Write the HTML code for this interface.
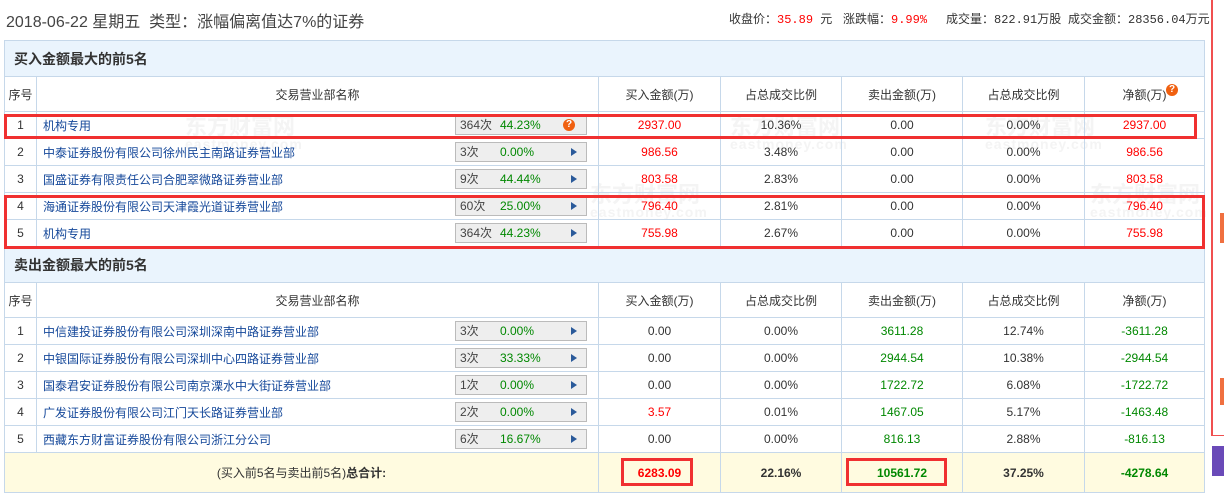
<!DOCTYPE html>
<html><head><meta charset="utf-8">
<style>
*{margin:0;padding:0;box-sizing:border-box}
body{width:1224px;height:496px;background:#fff;font-family:"Liberation Sans","Noto Sans CJK SC",sans-serif;font-size:12px;color:#333;position:relative;overflow:hidden}
.abs{position:absolute}
.title{left:6px;top:8px;font-size:16px;color:#444}
.info{top:10px;font-size:12px;color:#333;font-family:"Liberation Mono","Noto Sans CJK SC",monospace}
.red{color:#f00}.green{color:#080}.blue{color:#15489a}
table{position:absolute;left:4px;border-collapse:collapse;table-layout:fixed;width:1200px}
td{border:1px solid #c6d8ea;text-align:center;height:27px;padding:0;white-space:nowrap;overflow:hidden}
td.n{text-align:left;padding-left:6px;color:#15489a;position:relative}
.sec td{background:#eaf4fd;height:36px;text-align:left;padding-left:9px;font-weight:bold;font-size:14px;color:#333}
.hd td{height:35px;color:#333}
.btn{position:absolute;left:418px;top:3px;width:132px;height:20px;background:#eee;border:1px solid #bbb;font-size:12px;line-height:18px;color:#444}
.btn .c{position:absolute;left:4px}
.btn .p{position:absolute;left:44px;color:#080}
.btn .a{position:absolute;right:9px;top:5px;width:0;height:0;border-left:6px solid #2a5a9a;border-top:4px solid transparent;border-bottom:4px solid transparent}
.q{position:absolute;right:11px;top:3px;width:12px;height:12px;border-radius:6px;background:#f06010;color:#fff;font-size:10px;line-height:12px;text-align:center;font-weight:bold}
.tot td{background:#fffbe0;height:40px;font-weight:bold}
.box{position:absolute;border:3px solid #f03030}
.wm{position:absolute;color:#f4f4f4;font-weight:bold;font-size:22px;line-height:22px;pointer-events:none}
.wm span{display:block;font-size:14px;line-height:12px;letter-spacing:1px}
</style></head><body>
<div class="abs title">2018-06-22 星期五&nbsp; 类型：涨幅偏离值达7%的证券</div>
<div class="abs info" style="left:729px">收盘价：<span class="red">35.89</span> 元</div>
<div class="abs info" style="left:843px">涨跌幅：<span class="red">9.99%</span></div>
<div class="abs info" style="left:946px">成交量：822.91万股</div>
<div class="abs info" style="left:1068px">成交金额：28356.04万元</div>

<div class="wm" style="left:185px;top:116px">东方财富网<span>eastmoney.com</span></div>
<div class="wm" style="left:730px;top:116px">东方财富网<span>eastmoney.com</span></div>
<div class="wm" style="left:985px;top:116px">东方财富网<span>eastmoney.com</span></div>
<div class="wm" style="left:590px;top:184px">东方财富网<span>eastmoney.com</span></div>
<div class="wm" style="left:1090px;top:184px">东方财富网<span>eastmoney.com</span></div>

<table style="top:40px">
<colgroup><col style="width:32px"><col style="width:562px"><col style="width:122px"><col style="width:121px"><col style="width:121px"><col style="width:122px"><col style="width:120px"></colgroup>
<tr class="sec"><td colspan="7">买入金额最大的前5名</td></tr>
<tr class="hd"><td>序号</td><td>交易营业部名称</td><td>买入金额(万)</td><td>占总成交比例</td><td>卖出金额(万)</td><td>占总成交比例</td><td style="position:relative">净额(万)<span class="q" style="right:26px;top:7px">?</span></td></tr>
<tr><td>1</td><td class="n">机构专用<div class="btn"><span class="c">364次</span><span class="p">44.23%</span><span class="q">?</span></div></td><td class="red">2937.00</td><td>10.36%</td><td>0.00</td><td>0.00%</td><td class="red">2937.00</td></tr>
<tr><td>2</td><td class="n">中泰证券股份有限公司徐州民主南路证券营业部<div class="btn"><span class="c">3次</span><span class="p">0.00%</span><i class="a"></i></div></td><td class="red">986.56</td><td>3.48%</td><td>0.00</td><td>0.00%</td><td class="red">986.56</td></tr>
<tr><td>3</td><td class="n">国盛证券有限责任公司合肥翠微路证券营业部<div class="btn"><span class="c">9次</span><span class="p">44.44%</span><i class="a"></i></div></td><td class="red">803.58</td><td>2.83%</td><td>0.00</td><td>0.00%</td><td class="red">803.58</td></tr>
<tr><td>4</td><td class="n">海通证券股份有限公司天津霞光道证券营业部<div class="btn"><span class="c">60次</span><span class="p">25.00%</span><i class="a"></i></div></td><td class="red">796.40</td><td>2.81%</td><td>0.00</td><td>0.00%</td><td class="red">796.40</td></tr>
<tr><td>5</td><td class="n">机构专用<div class="btn"><span class="c">364次</span><span class="p">44.23%</span><i class="a"></i></div></td><td class="red">755.98</td><td>2.67%</td><td>0.00</td><td>0.00%</td><td class="red">755.98</td></tr>
<tr class="sec"><td colspan="7">卖出金额最大的前5名</td></tr>
<tr class="hd"><td>序号</td><td>交易营业部名称</td><td>买入金额(万)</td><td>占总成交比例</td><td>卖出金额(万)</td><td>占总成交比例</td><td>净额(万)</td></tr>
<tr><td>1</td><td class="n">中信建投证券股份有限公司深圳深南中路证券营业部<div class="btn"><span class="c">3次</span><span class="p">0.00%</span><i class="a"></i></div></td><td>0.00</td><td>0.00%</td><td class="green">3611.28</td><td>12.74%</td><td class="green">-3611.28</td></tr>
<tr><td>2</td><td class="n">中银国际证券股份有限公司深圳中心四路证券营业部<div class="btn"><span class="c">3次</span><span class="p">33.33%</span><i class="a"></i></div></td><td>0.00</td><td>0.00%</td><td class="green">2944.54</td><td>10.38%</td><td class="green">-2944.54</td></tr>
<tr><td>3</td><td class="n">国泰君安证券股份有限公司南京溧水中大街证券营业部<div class="btn"><span class="c">1次</span><span class="p">0.00%</span><i class="a"></i></div></td><td>0.00</td><td>0.00%</td><td class="green">1722.72</td><td>6.08%</td><td class="green">-1722.72</td></tr>
<tr><td>4</td><td class="n">广发证券股份有限公司江门天长路证券营业部<div class="btn"><span class="c">2次</span><span class="p">0.00%</span><i class="a"></i></div></td><td class="red">3.57</td><td>0.01%</td><td class="green">1467.05</td><td>5.17%</td><td class="green">-1463.48</td></tr>
<tr><td>5</td><td class="n">西藏东方财富证券股份有限公司浙江分公司<div class="btn"><span class="c">6次</span><span class="p">16.67%</span><i class="a"></i></div></td><td>0.00</td><td>0.00%</td><td class="green">816.13</td><td>2.88%</td><td class="green">-816.13</td></tr>
<tr class="tot"><td colspan="2" style="font-weight:normal">(买入前5名与卖出前5名)<b>总合计:</b></td><td class="red">6283.09</td><td>22.16%</td><td class="green">10561.72</td><td>37.25%</td><td class="green">-4278.64</td></tr>
</table>

<div class="box" style="left:4px;top:114px;width:1193px;height:25px"></div>
<div class="box" style="left:4px;top:195px;width:1201px;height:54px"></div>
<div class="box" style="left:621px;top:458px;width:72px;height:28px"></div>
<div class="box" style="left:846px;top:458px;width:101px;height:28px"></div>

<div class="abs" style="left:1211px;top:0;width:2px;height:436px;background:#f05050"></div>
<div class="abs" style="left:1211px;top:435px;width:13px;height:1px;background:#f05050"></div>
<div class="abs" style="left:1220px;top:213px;width:4px;height:30px;background:#f07040"></div>
<div class="abs" style="left:1220px;top:378px;width:4px;height:27px;background:#f07040"></div>
<div class="abs" style="left:1212px;top:446px;width:12px;height:30px;background:#6a4ab8"></div>
</body></html>
